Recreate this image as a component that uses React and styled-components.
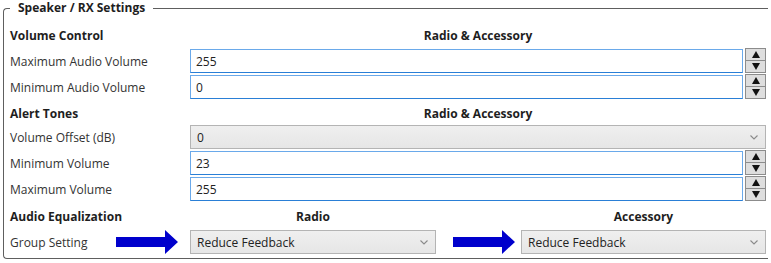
import React from "react";
import styled, { createGlobalStyle } from "styled-components";

const GlobalStyle = createGlobalStyle`
  body {
    margin: 0;
    background: #ffffff;
    font-family: "Open Sans", "Noto Sans", sans-serif;
    font-size: 12px;
    color: #333333;
  }
`;

const Frame = styled.fieldset`
  margin: 0 0 0 3px;
  width: 765px;
  box-sizing: border-box;
  padding: 8px 2px 5px 6px;
  border: 1px solid #5e5e5e;
  border-right: none;
  border-radius: 4px 0 0 4px;
  display: flex;
  flex-direction: column;
  gap: 2px;
  min-width: 0;
`;

const Legend = styled.legend`
  padding: 0 8px;
  font-weight: 700;
  font-size: 12px;
  line-height: 16px;
  color: #1e1e1e;
`;

const Row = styled.div`
  display: grid;
  grid-template-columns: ${(p) => p.cols || "180px 1fr"};
  align-items: center;
  height: ${(p) => p.h || 24}px;
`;

const Heading = styled.span`
  font-weight: 700;
  color: #1e1e1e;
  text-align: ${(p) => (p.center ? "center" : "left")};
  padding-top: ${(p) => p.pt || 0}px;
`;

const Label = styled.span`
  color: #333333;
`;

const LabelCell = styled.div`
  display: flex;
  align-items: center;
  justify-content: space-between;
  padding-right: 12px;
`;

const SpinWrap = styled.div`
  display: flex;
  align-items: stretch;
  gap: 2px;
  height: 100%;
`;

const Input = styled.div`
  flex: 1;
  box-sizing: border-box;
  border: 1px solid #6aa9ea;
  border-bottom-color: #2a7fd6;
  background: #fff;
  padding: 0 5px;
  display: flex;
  align-items: center;
  color: #222;
`;

const Spinner = styled.div`
  width: 21px;
  display: flex;
  flex-direction: column;
  margin: -1px 0 0 0;
`;

const SpinButton = styled.div`
  flex: 1;
  box-sizing: border-box;
  border: 1px solid #8c8c8c;
  background: #dedede;
  display: flex;
  align-items: center;
  justify-content: center;
  & + & {
    border-top: none;
  }
`;

const Tri = styled.span`
  width: 0;
  height: 0;
  border-left: 4px solid transparent;
  border-right: 4px solid transparent;
  ${(p) =>
    p.down
      ? "border-top: 7px solid #111;"
      : "border-bottom: 7px solid #111;"}
`;

const Select = styled.div`
  box-sizing: border-box;
  height: 100%;
  border: 1px solid #b4b4b4;
  background: linear-gradient(#efefef, #e6e6e6);
  display: flex;
  align-items: center;
  justify-content: space-between;
  padding: 0 7px 0 6px;
  color: #222;
`;

const ArrowCell = styled.div`
  display: flex;
  align-items: center;
  padding-left: 17px;
`;

const Chevron = () => (
  <svg width="8" height="5" viewBox="0 0 8 5">
    <polyline points="0.5,0.5 4,4 7.5,0.5" fill="none" stroke="#8a8a8a" strokeWidth="1.1" />
  </svg>
);

const BlueArrow = () => (
  <svg width="62" height="24" viewBox="0 0 62 24">
    <polygon points="0,7 49,7 49,0 62,12 49,24 49,17 0,17" fill="#0000cc" />
  </svg>
);

const NumberBox = ({ value }) => (
  <SpinWrap>
    <Input>{value}</Input>
    <Spinner>
      <SpinButton>
        <Tri />
      </SpinButton>
      <SpinButton>
        <Tri down />
      </SpinButton>
    </Spinner>
  </SpinWrap>
);

const Dropdown = ({ value }) => (
  <Select>
    <span>{value}</span>
    <Chevron />
  </Select>
);

export default function App() {
  return (
    <>
      <GlobalStyle />
      <Frame>
        <Legend>Speaker / RX Settings</Legend>

        <Row h={23}>
          <Heading>Volume Control</Heading>
          <Heading center>Radio &amp; Accessory</Heading>
        </Row>
        <Row>
          <Label>Maximum Audio Volume</Label>
          <NumberBox value="255" />
        </Row>
        <Row>
          <Label>Minimum Audio Volume</Label>
          <NumberBox value="0" />
        </Row>

        <Row h={22}>
          <Heading pt={2}>Alert Tones</Heading>
          <Heading pt={2} center>Radio &amp; Accessory</Heading>
        </Row>
        <Row>
          <Label>Volume Offset (dB)</Label>
          <Dropdown value="0" />
        </Row>
        <Row>
          <Label>Minimum Volume</Label>
          <NumberBox value="23" />
        </Row>
        <Row>
          <Label>Maximum Volume</Label>
          <NumberBox value="255" />
        </Row>

        <Row h={25} cols="180px 246px 85px 1fr">
          <Heading pt={2}>Audio Equalization</Heading>
          <Heading pt={2} center>Radio</Heading>
          <span />
          <Heading pt={2} center>Accessory</Heading>
        </Row>
        <Row h={23} cols="180px 246px 85px 1fr">
          <LabelCell>
            <Label>Group Setting</Label>
            <BlueArrow />
          </LabelCell>
          <Dropdown value="Reduce Feedback" />
          <ArrowCell>
            <BlueArrow />
          </ArrowCell>
          <Dropdown value="Reduce Feedback" />
        </Row>
      </Frame>
    </>
  );
}
